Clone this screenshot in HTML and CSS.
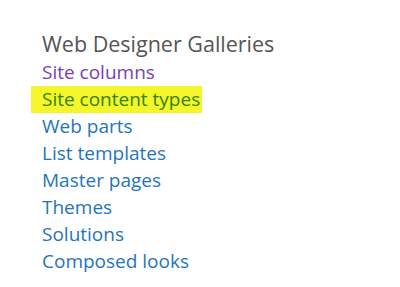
FILE: index.html
```html
<!DOCTYPE html>
<html>
<head>
    <title>Web Designer Galleries</title>
    <link rel="stylesheet" href="styles.css">
</head>
<body>
    <div class="galleries">
        <h2 class="title">Web Designer Galleries</h2>
        <ul class="links">
            <li><a class="visited" href="#">Site columns</a></li>
            <li class="marked"><a href="#">Site content types</a></li>
            <li><a href="#">Web parts</a></li>
            <li><a href="#">List templates</a></li>
            <li><a href="#">Master pages</a></li>
            <li><a href="#">Themes</a></li>
            <li><a href="#">Solutions</a></li>
            <li><a href="#">Composed looks</a></li>
        </ul>
    </div>
</body>
</html>
```

FILE: styles.css
```css
body {
    margin: 0;
    background: #fff;
    font-family: "Open Sans", "Noto Sans", sans-serif;
}

.galleries {
    padding: 29px 0 0 42px;
}

.title {
    margin: 0;
    font-size: 21.5px;
    font-weight: normal;
    color: #555;
    line-height: 30px;
    white-space: nowrap;
}

.links {
    list-style-type: none;
    margin: 0;
    padding: 0;
}

.links>li {
    font-size: 19px;
    line-height: 27px;
    white-space: nowrap;
}

.links a {
    color: #1f74c0;
    text-decoration: none;
}

.links a.visited {
    color: #7a3fb0;
}

.marked {
    margin-left: -11px;
    padding-left: 11px;
    width: 160px;
    background: #f4f52a;
}

.marked a {
    color: #358400;
}
```
